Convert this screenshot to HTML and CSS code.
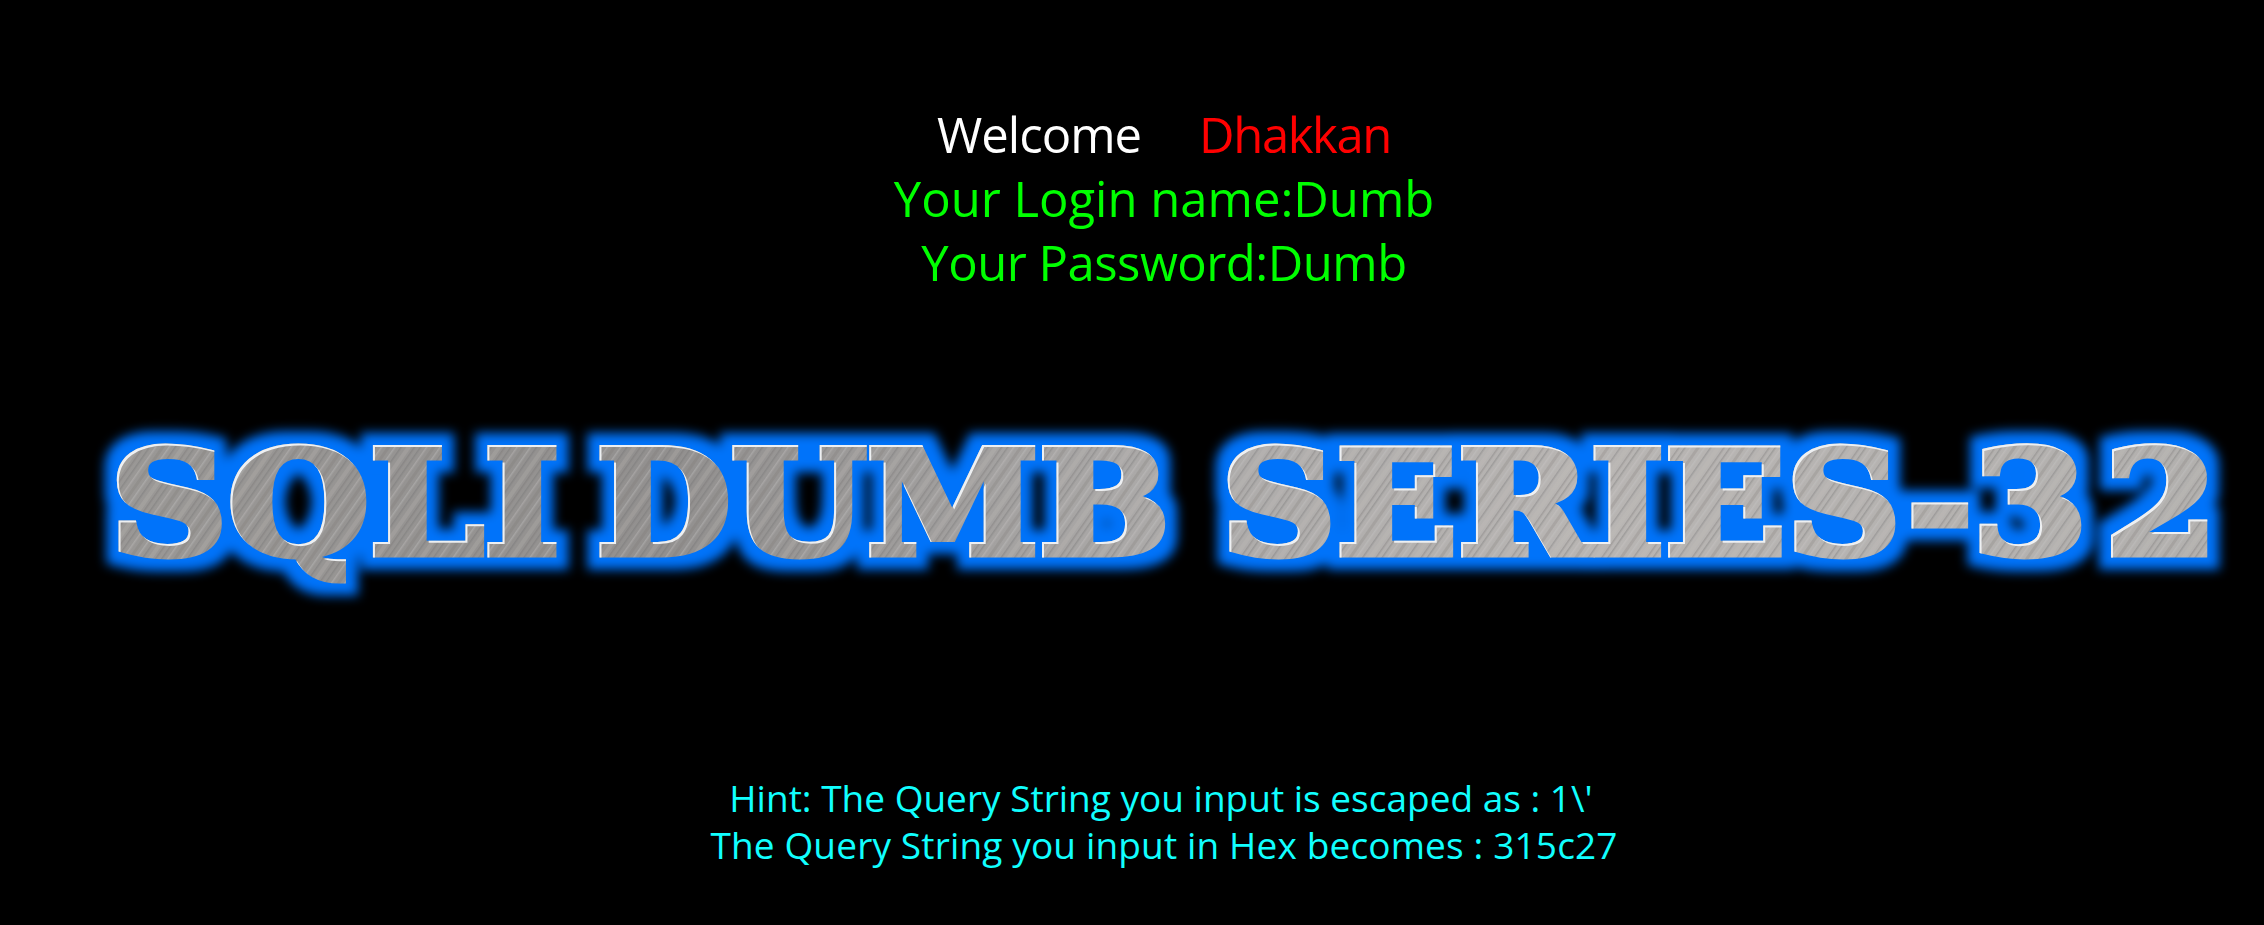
FILE: index.html
```html
<!DOCTYPE html>
<html lang="en">
<head>
<meta charset="utf-8">
<title>Less-32 Unicode Escape</title>
<link rel="stylesheet" href="styles.css">
</head>
<body>
<main class="page">
  <section class="greeting">
    <div class="line"><span class="welcome">Welcome</span><span class="name">Dhakkan</span></div>
    <div class="line creds">Your Login name:Dumb</div>
    <div class="line creds password">Your Password:Dumb</div>
  </section>
  <svg class="logo" viewBox="0 0 2264 240" width="2264" height="240" role="img" aria-label="SQLI DUMB SERIES-32">
    <defs>
      <linearGradient id="sheen" gradientUnits="userSpaceOnUse" x1="100" y1="0" x2="2220" y2="0">
        <stop offset="0" stop-color="#9a9896"/>
        <stop offset="0.27" stop-color="#92908f"/>
        <stop offset="0.5" stop-color="#acaaa9"/>
        <stop offset="0.7" stop-color="#b8b5b3"/>
        <stop offset="1" stop-color="#b2b0ae"/>
      </linearGradient>
      <pattern id="lines" patternUnits="userSpaceOnUse" width="37" height="120" patternTransform="rotate(35)">
        <rect x="2" width="1.5" height="120" fill="#6f6e70" opacity=".35"/>
        <rect x="7" width="1.5" height="120" fill="#d2d0ce" opacity=".3"/>
        <rect x="12" width="3" height="120" fill="#77736f" opacity=".22"/>
        <rect x="18" width="1.5" height="120" fill="#c9c9c9" opacity=".35"/>
        <rect x="23" width="1.5" height="120" fill="#66676b" opacity=".3"/>
        <rect x="28" width="4" height="120" fill="#c6c2bf" opacity=".2"/>
        <rect x="34" width="1.5" height="120" fill="#6e6c6c" opacity=".3"/>
      </pattern>
      <pattern id="metal" patternUnits="userSpaceOnUse" width="2264" height="240">
        <rect width="2264" height="240" fill="url(#sheen)"/>
        <rect width="2264" height="240" fill="url(#lines)"/>
      </pattern>
      <filter id="glow" filterUnits="userSpaceOnUse" x="0" y="0" width="2264" height="240" color-interpolation-filters="sRGB">
        <feMorphology in="SourceAlpha" operator="dilate" radius="12" result="fat"/>
        <feGaussianBlur in="fat" stdDeviation="5.5" result="soft"/>
        <feFlood flood-color="#0073fa"/>
        <feComposite in2="soft" operator="in" result="halo"/>
        <feGaussianBlur in="SourceGraphic" stdDeviation="0.6" result="metalSoft"/>
        <feOffset in="SourceAlpha" dx="1.5" dy="1.5" result="shifted"/>
        <feComposite in="SourceAlpha" in2="shifted" operator="out" result="edge"/>
        <feFlood flood-color="#eef0f2"/>
        <feComposite in2="edge" operator="in" result="light"/>
        <feMerge>
          <feMergeNode in="halo"/>
          <feMergeNode in="metalSoft"/>
          <feMergeNode in="light"/>
        </feMerge>
      </filter>
    </defs>
    <g class="logo-text" filter="url(#glow)">
      <text x="110" y="156" textLength="450" lengthAdjust="spacingAndGlyphs">SQLI</text>
      <text x="596" y="156" textLength="574" lengthAdjust="spacingAndGlyphs">DUMB</text>
      <text x="1221" y="156" textLength="752" lengthAdjust="spacingAndGlyphs">SERIES-</text>
      <text x="1972" y="156" textLength="116" lengthAdjust="spacingAndGlyphs">3</text>
      <text x="2104" y="156" textLength="114" lengthAdjust="spacingAndGlyphs">2</text>
    </g>
  </svg>
  <section class="hint">
    <div class="hint-first">Hint: The Query String you input is escaped as : 1\'</div>
    <div class="hint-second">The Query String you input in Hex becomes : 315c27</div>
  </section>
</main>
</body>
</html>
```
FILE: styles.css
```css
html, body {
  margin: 0;
  height: 100%;
  background: #000;
}

body {
  font-family: "Open Sans", "Noto Sans", sans-serif;
  overflow: hidden;
}

.page {
  display: flex;
  flex-direction: column;
  min-height: 925px;
}

.greeting {
  padding: 102px 0 0 64px;
  text-align: center;
  font-size: 49px;
  line-height: 64px;
}

.line {
  height: 64px;
}

.welcome {
  color: #fff;
  margin-right: 58px;
  letter-spacing: -1px;
}

.name {
  color: #f00;
  letter-spacing: -1.4px;
}

.creds {
  color: #0f0;
}

.password {
  letter-spacing: -0.5px;
}

.logo {
  display: block;
  margin-top: 104px;
}

.logo-text {
  font-family: "DejaVu Serif", serif;
  font-weight: 700;
  font-size: 144px;
  fill: url(#metal);
  stroke: url(#metal);
  stroke-width: 7px;
  stroke-linejoin: miter;
}

.hint {
  padding: 136px 0 0 64px;
  text-align: center;
  color: #1ff;
  font-size: 37px;
  line-height: 47px;
}

.hint-first {
  padding-right: 6px;
}

.hint-second {
  letter-spacing: 0.15px;
}
```
